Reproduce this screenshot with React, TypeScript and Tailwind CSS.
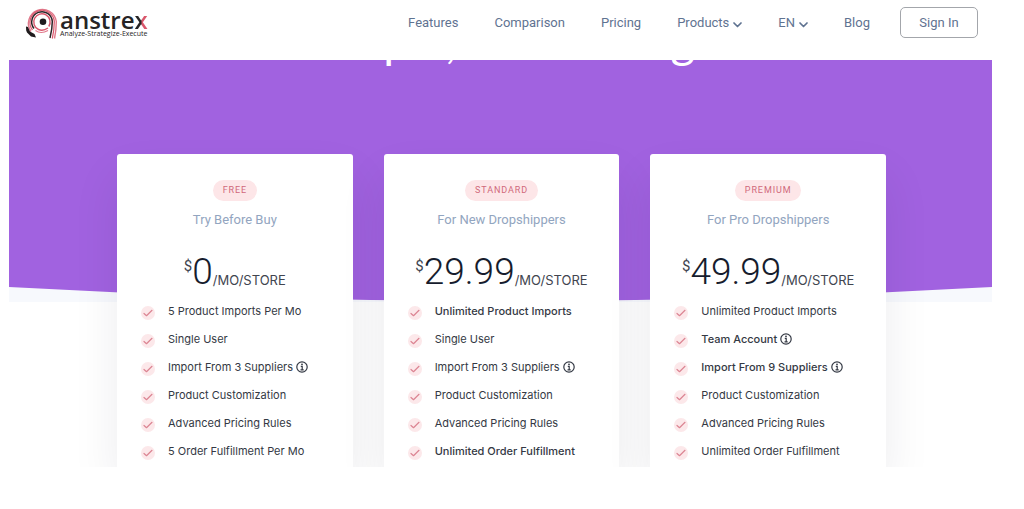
import React from "react";

type Feature = { text: string; info?: boolean; strong?: boolean };
type Plan = { badge: string; audience: string; price: string; features: Feature[] };

const plans: Plan[] = [
  {
    badge: "Free",
    audience: "Try Before Buy",
    price: "0",
    features: [
      { text: "5 Product Imports Per Mo" },
      { text: "Single User" },
      { text: "Import From 3 Suppliers", info: true },
      { text: "Product Customization" },
      { text: "Advanced Pricing Rules" },
      { text: "5 Order Fulfillment Per Mo" },
    ],
  },
  {
    badge: "Standard",
    audience: "For New Dropshippers",
    price: "29.99",
    features: [
      { text: "Unlimited Product Imports", strong: true },
      { text: "Single User" },
      { text: "Import From 3 Suppliers", info: true },
      { text: "Product Customization" },
      { text: "Advanced Pricing Rules" },
      { text: "Unlimited Order Fulfillment", strong: true },
    ],
  },
  {
    badge: "Premium",
    audience: "For Pro Dropshippers",
    price: "49.99",
    features: [
      { text: "Unlimited Product Imports" },
      { text: "Team Account", info: true, strong: true },
      { text: "Import From 9 Suppliers", info: true, strong: true },
      { text: "Product Customization" },
      { text: "Advanced Pricing Rules" },
      { text: "Unlimited Order Fulfillment" },
    ],
  },
];

function LogoMark() {
  return (
    <svg viewBox="0 0 34 34" className="h-[34px] w-[34px] shrink-0" fill="none" aria-hidden="true">
      <path d="M7 25.500A14 14 0 1 1 32.300 15.500c0 6-.5 11-1.800 17" stroke="#e0788a" strokeWidth="1.400" />
      <path d="M8.500 24A12.200 12.200 0 1 1 30.300 15.500c0 6-.7 11-2 17" stroke="#d9566b" strokeWidth="1.200" />
      <path d="M10 22.500A10.300 10.300 0 1 1 28.300 15.500c0 6-.9 11-2.300 16.500" stroke="#2b2326" strokeWidth="1.500" />
      <path d="M24.800 20.500A8.200 8.200 0 1 0 14.500 23.500c3 1.300 6.500.6 9.500-1.500" stroke="#d9566b" strokeWidth="1.400" />
      <path d="M11.500 24.500c3.500 2.600 8 2.500 12.500 0" stroke="#e0788a" strokeWidth="1.200" />
      <circle cx="19" cy="15.800" r="3.300" fill="#1f1b1d" />
      <path d="M2 20.500l2 .5 2 4.500 4.500 2.500 1.500 3.500-5-1-4-4-.8-2z" fill="#1f1b1d" />
    </svg>
  );
}

function Chevron() {
  return (
    <svg viewBox="0 0 9 6" className="mt-1 h-1.5 w-[9px]" fill="none" aria-hidden="true">
      <path d="M1 1l3.500 3.500L8 1" stroke="currentColor" strokeWidth="1.700" strokeLinecap="round" strokeLinejoin="round" />
    </svg>
  );
}

function CheckBadge() {
  return (
    <span className="mt-[5px] flex size-3.5 shrink-0 items-center justify-center rounded-full bg-[#fce8ea]">
      <svg viewBox="0 0 10 8" className="h-2 w-2.5" fill="none" aria-hidden="true">
        <path d="M1 4.500L3.500 6.700 9 1.300" stroke="#dc8593" strokeWidth="1.200" strokeLinecap="round" strokeLinejoin="round" />
      </svg>
    </span>
  );
}

function InfoIcon() {
  return (
    <svg viewBox="0 0 12 12" className="size-3 shrink-0" fill="none" role="img" aria-label="More information">
      <circle cx="6" cy="6" r="5.200" stroke="currentColor" strokeWidth="1.200" />
      <path d="M4.800 5.300H6.200V8.700M4.500 8.800h3.200" stroke="currentColor" strokeWidth="1.200" />
      <circle cx="6" cy="3.300" r=".9" fill="currentColor" />
    </svg>
  );
}

function Header() {
  return (
    <header className="relative z-10 flex h-[60px] items-start justify-between bg-white pl-6 pr-[46px]">
      <a href="#home" className="mt-1.5 flex items-start gap-0.5" aria-label="Anstrex home">
        <LogoMark />
        <span className="flex flex-col font-['Open_Sans',sans-serif]">
          <span className="text-[24px] font-semibold leading-[28px] text-[#262425]">
            anstre
            <span className="bg-linear-to-r from-[#262425] from-45% to-[#d9566b] to-55% bg-clip-text text-transparent">x</span>
          </span>
          <span className="-mt-1 text-[7px] font-medium leading-[8px] text-[#262425]">Analyze-Strategize-Execute</span>
        </span>
      </a>
      <nav className="mt-[7px] flex items-center gap-9 whitespace-nowrap font-[Roboto,sans-serif] text-[13px] leading-5 text-[#5f7391]">
        <a href="#features">Features</a>
        <a href="#comparison">Comparison</a>
        <a href="#pricing">Pricing</a>
        <button type="button" className="flex items-center gap-1">
          Products
          <Chevron />
        </button>
        <button type="button" className="flex items-center gap-1">
          EN
          <Chevron />
        </button>
        <a href="#blog">Blog</a>
        <a href="#signin" className="-ml-1.5 flex h-[31px] w-[78px] items-center justify-center rounded-[5px] border border-[#a3a6ab]">
          Sign In
        </a>
      </nav>
    </header>
  );
}

function PlanCard({ plan }: { plan: Plan }) {
  return (
    <article className="rounded-t-[3px] bg-white px-6 pb-1.5 pt-[26px] shadow-[0_24px_48px_rgba(22,28,45,0.08)]">
      <div className="flex flex-col items-center whitespace-nowrap">
        <span className="rounded-full bg-[#fde6e8] px-2.5 font-[Roboto,sans-serif] text-[9px] uppercase leading-[21px] tracking-widest text-[#d0697b]">
          {plan.badge}
        </span>
        <h2 className="mt-[9px] font-[Roboto,sans-serif] text-[13px] leading-5 text-[#92a5c0]">{plan.audience}</h2>
        <p className="mt-[25px] flex items-end text-[#161c2d]">
          <span className="self-start font-[Roboto,sans-serif] text-[15px] leading-[22px] text-[#41454f]">$</span>
          <span className="font-[Roboto,sans-serif] text-[37px] font-light leading-[34px]">{plan.price}</span>
          <span className="text-[13px] leading-[18px] text-[#41454f]">/MO/STORE</span>
        </p>
      </div>
      <ul className="mt-3 flex flex-col gap-2 text-[11px]">
        {plan.features.map((f) => (
          <li key={f.text} className="flex h-5 items-start gap-[13px] whitespace-nowrap">
            <CheckBadge />
            <span className={f.strong ? "flex items-center gap-[3px] font-medium leading-5 text-[#343944]" : "flex items-center gap-[3px] leading-5 text-[#343944]"}>
              {f.text}
              {f.info && <InfoIcon />}
            </span>
          </li>
        ))}
      </ul>
    </article>
  );
}

export default function App() {
  return (
    <div className="min-h-screen bg-white font-[Inter,sans-serif]">
      <Header />
      <main className="relative overflow-hidden pl-[9px] pr-8">
        <div className="absolute left-[9px] right-8 top-0 flex h-[242px] flex-col bg-[#f7f9fd]">
          <div className="flex-1 bg-[#a162e0]" />
          <svg viewBox="0 0 984 16" preserveAspectRatio="none" className="h-4 w-full" aria-hidden="true">
            <path d="M0 0H984V1Q492 29 0 1Z" fill="#a162e0" />
          </svg>
        </div>
        <div className="relative pl-0.5">
          <h1 className="-mt-[42px] text-center font-[Lato,sans-serif] text-[47px] leading-[44px] text-white">Simple, Fair Pricing</h1>
          <div className="mx-auto mt-[92px] grid max-w-[769px] grid-cols-3 gap-[31px]">
            {plans.map((plan) => (
              <PlanCard key={plan.badge} plan={plan} />
            ))}
          </div>
        </div>
      </main>
    </div>
  );
}
